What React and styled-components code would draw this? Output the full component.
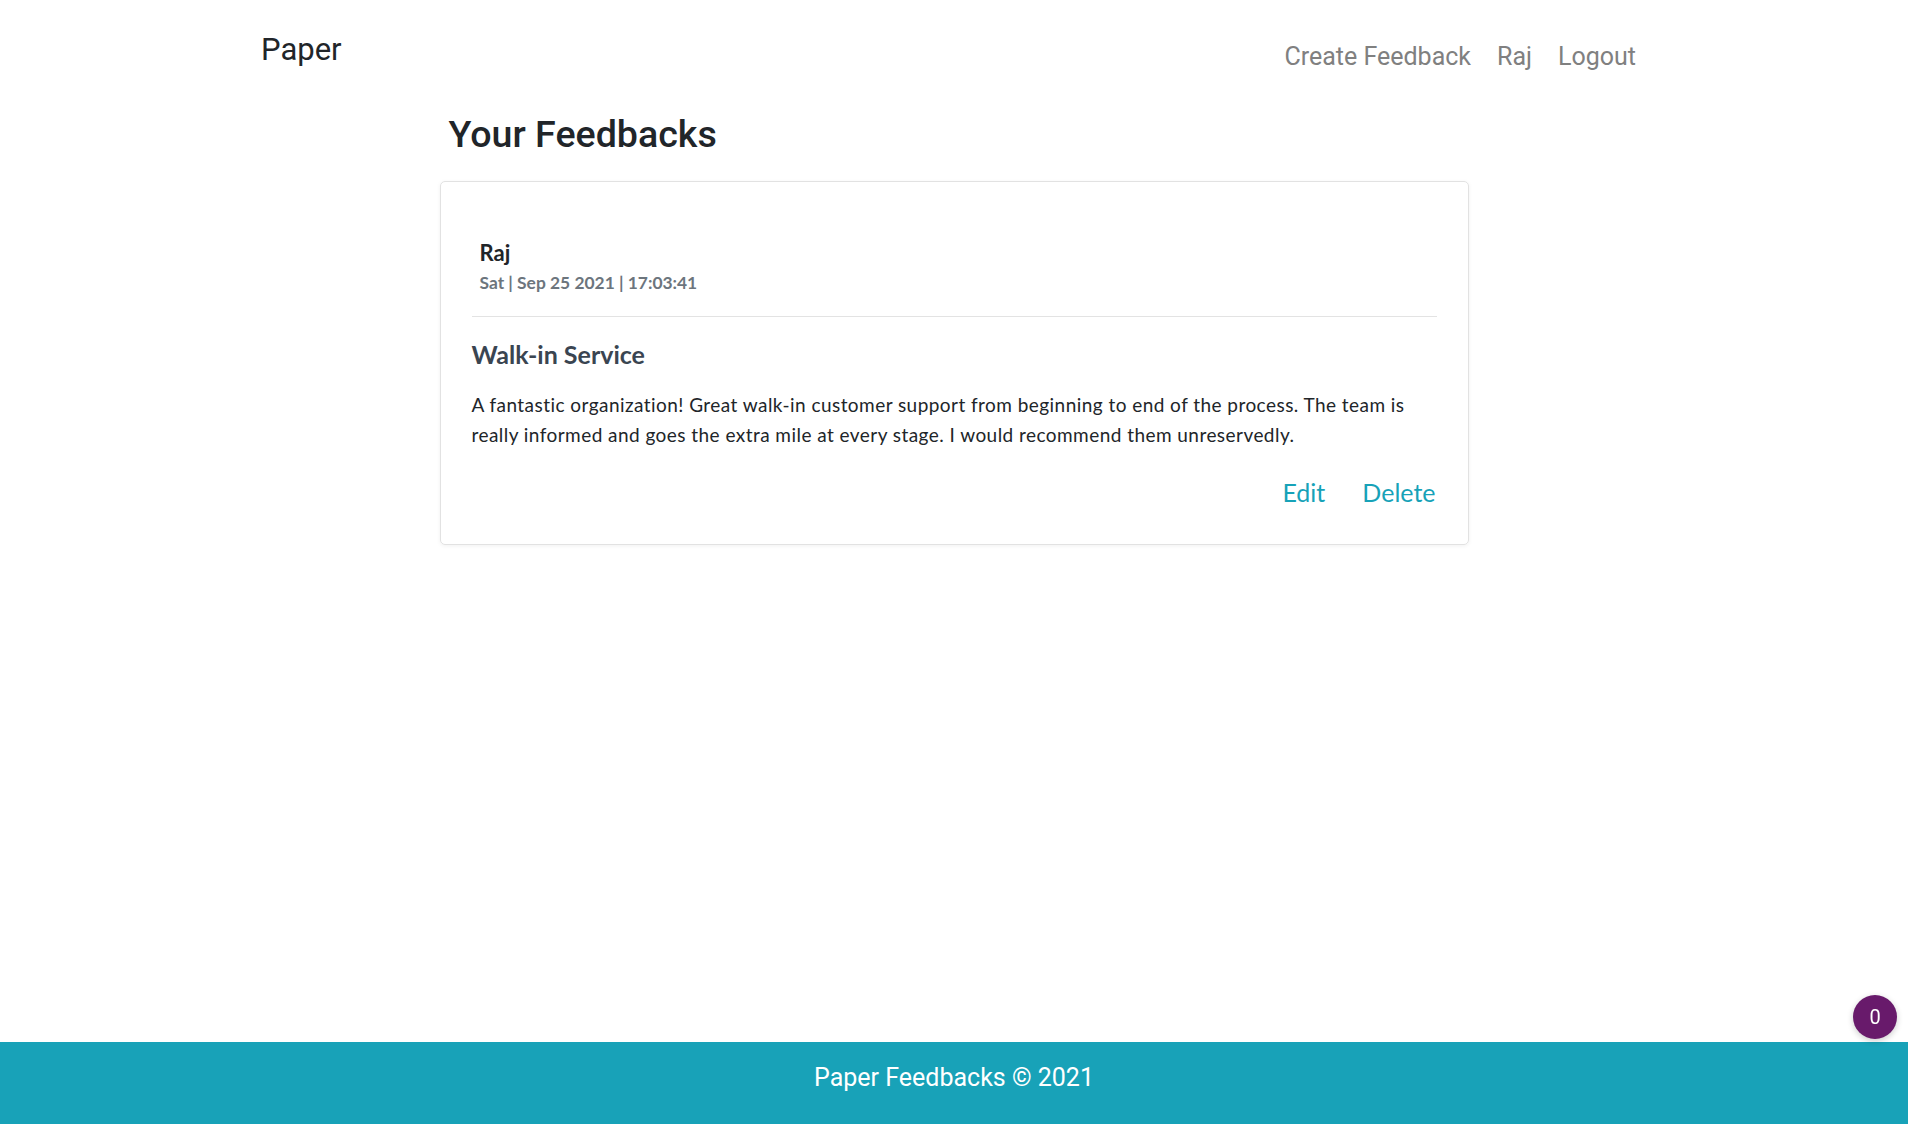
import React from 'react'
import styled, { createGlobalStyle } from 'styled-components'

const Global = createGlobalStyle`
html, body {
  margin: 0;
  padding: 0;
  background: #fff;
}
* { box-sizing: border-box; }
`

function App() {
    return (
        <>
            <Global />
            <Page>
                <Header>
                    <Brand>Paper</Brand>
                    <Nav>
                        <NavLink href="#">Create Feedback</NavLink>
                        <NavLink href="#">Raj</NavLink>
                        <NavLink href="#">Logout</NavLink>
                    </Nav>
                </Header>
                <Main>
                    <Title>Your Feedbacks</Title>
                    <Card>
                        <CardHead>
                            <Author>Raj</Author>
                            <Stamp>Sat | Sep 25 2021 | 17:03:41</Stamp>
                        </CardHead>
                        <Rule />
                        <Subject>Walk-in Service</Subject>
                        <Body>
                            A fantastic organization! Great walk-in customer support from beginning to end of the process. The team is really informed and goes the extra mile at every stage. I would recommend them unreservedly.
                        </Body>
                        <Actions>
                            <Action href="#">Edit</Action>
                            <Action href="#">Delete</Action>
                        </Actions>
                    </Card>
                </Main>
                <Footer>Paper Feedbacks © 2021</Footer>
            </Page>
            <Badge>0</Badge>
        </>
    )
}

const Page = styled.div`
display: flex;
flex-direction: column;
min-height: 100vh;
font-family: Roboto, "Liberation Sans", sans-serif;
`
const Header = styled.header`
display: flex;
justify-content: space-between;
align-items: flex-start;
padding: 31px 272px 0 260px;
`
const Brand = styled.div`
font-size: 31px;
line-height: 1.2;
color: #212529;
margin-left: 1px;
`
const Nav = styled.nav`
display: flex;
gap: 26px;
margin-top: 11px;
`
const NavLink = styled.a`
font-size: 25px;
line-height: 1.2;
color: #808080;
text-decoration: none;
`
const Main = styled.main`
flex: 1;
width: 1029px;
margin: 0 auto;
`
const Title = styled.h1`
font-family: Roboto, "Liberation Sans", sans-serif;
font-weight: 500;
font-size: 37.6px;
line-height: 1.2;
color: #212529;
margin: 40px 0 24px 9px;
`
const Card = styled.section`
border: 1px solid #e2e2e2;
border-radius: 5px;
box-shadow: 0 1px 4px rgba(0,0,0,0.06);
padding: 31px 31px 37px 31px;
font-family: Lato, "Liberation Sans", sans-serif;
`
const CardHead = styled.div`
padding: 27px 8px 0 8px;
`
const Author = styled.div`
font-weight: 700;
font-size: 22px;
line-height: 1.2;
color: #212529;
`
const Stamp = styled.div`
font-weight: 700;
font-size: 17.4px;
line-height: 1.2;
color: #6c757d;
margin-top: 6px;
`
const Rule = styled.hr`
border: none;
border-top: 1px solid #e3e3e3;
margin: 23px 0 0 0;
`
const Subject = styled.h2`
font-weight: 700;
font-size: 25px;
line-height: 1.2;
color: #3a4551;
margin: 22px 0 0 0;
`
const Body = styled.p`
font-size: 19px;
letter-spacing: 0.45px;
line-height: 30px;
color: #212529;
margin: 21px 0 0 0;
`
const Actions = styled.div`
display: flex;
justify-content: flex-end;
gap: 37px;
margin-top: 27px;
padding-right: 1px;
`
const Action = styled.a`
font-size: 25px;
line-height: 1.2;
color: #17a2b8;
text-decoration: none;
`
const Footer = styled.footer`
height: 82px;
background: #18a2b8;
color: #fff;
font-size: 25px;
display: flex;
align-items: center;
justify-content: center;
padding-bottom: 12px;
`
const Badge = styled.div`
position: fixed;
right: 11px;
bottom: 85px;
width: 44px;
height: 44px;
border-radius: 50%;
background: #681a6b;
color: #fff;
font-family: Roboto, "Liberation Sans", sans-serif;
font-size: 20px;
display: flex;
align-items: center;
justify-content: center;
box-shadow: 0 2px 6px rgba(0,0,0,0.2);
`

export default App
